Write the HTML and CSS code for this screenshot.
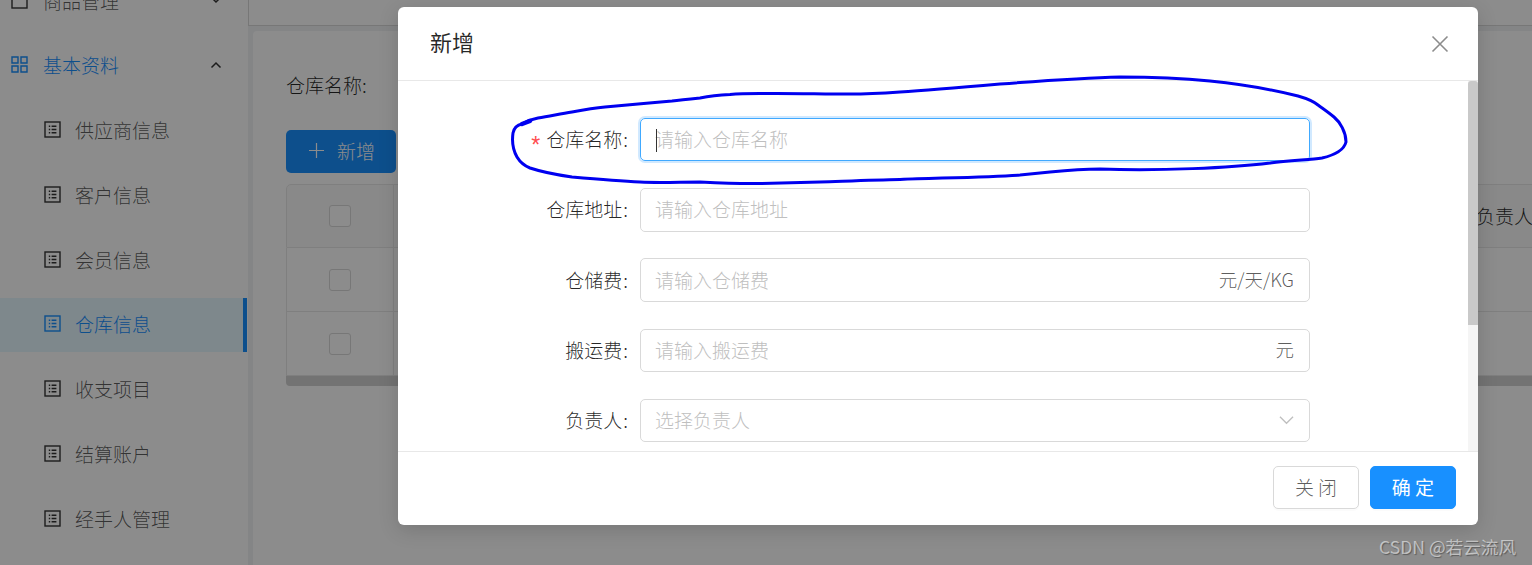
FILE: index.html
```html
<!DOCTYPE html>
<html lang="zh-CN">
<head>
    <meta charset="UTF-8">
    <title>仓库信息</title>
    <link rel="stylesheet" href="styles.css">
</head>
<body>

    <svg class="defs" width="0" height="0">
        <symbol id="icon-list" viewBox="0 0 17 17">
            <rect x="1" y="1" width="15" height="15" fill="none" stroke="currentColor" stroke-width="1.4"/>
            <path d="M4.8 5.2h1.4M4.8 8.5h1.4M4.8 11.8h1.4M7.6 5.2h4.8M7.6 8.5h4.8M7.6 11.8h4.8" stroke="currentColor" stroke-width="1.4" fill="none"/>
        </symbol>
    </svg>

    <div class="layout">
        <aside class="sidebar">
            <ul class="menu">
                <li class="menu-item group">
                    <svg class="group-icon" viewBox="0 0 17 17"><rect x="1" y="1" width="15" height="15" fill="none" stroke="currentColor" stroke-width="1.4"/></svg>
                    <span class="menu-text">商品管理</span>
                    <svg class="arrow" viewBox="0 0 12 8"><path d="M1.5 1.5 6 6l4.500-4.500" fill="none" stroke="currentColor" stroke-width="1.500"/></svg>
                </li>
                <li class="menu-item group open">
                    <svg class="group-icon" viewBox="0 0 17 17"><path d="M1 1h6v6H1zM10 1h6v6h-6zM1 10h6v6H1zM10 10h6v6h-6z" fill="none" stroke="currentColor" stroke-width="1.400"/></svg>
                    <span class="menu-text">基本资料</span>
                    <svg class="arrow" viewBox="0 0 12 8"><path d="M1.500 6.500 6 2l4.500 4.500" fill="none" stroke="#333" stroke-width="1.500"/></svg>
                </li>
                <li class="menu-item sub"><svg class="sub-icon"><use href="#icon-list"/></svg><span>供应商信息</span></li>
                <li class="menu-item sub"><svg class="sub-icon"><use href="#icon-list"/></svg><span>客户信息</span></li>
                <li class="menu-item sub"><svg class="sub-icon"><use href="#icon-list"/></svg><span>会员信息</span></li>
                <li class="menu-item sub active"><svg class="sub-icon"><use href="#icon-list"/></svg><span>仓库信息</span></li>
                <li class="menu-item sub"><svg class="sub-icon"><use href="#icon-list"/></svg><span>收支项目</span></li>
                <li class="menu-item sub"><svg class="sub-icon"><use href="#icon-list"/></svg><span>结算账户</span></li>
                <li class="menu-item sub"><svg class="sub-icon"><use href="#icon-list"/></svg><span>经手人管理</span></li>
            </ul>
        </aside>

        <main class="main">
            <div class="topbar"></div>
            <div class="content">
                <div class="card">
                    <div class="search-label">仓库名称:</div>
                    <button class="add-btn" type="button">
                        <svg class="plus" viewBox="0 0 16 16"><path d="M8 0v16M0 8h16" stroke="currentColor" stroke-width="1.300" fill="none"/></svg>
                        <span>新增</span>
                    </button>
                    <div class="table">
                        <div class="table-row head">
                            <div class="check-cell"><span class="checkbox"></span></div>
                            <div class="owner-cell">负责人</div>
                        </div>
                        <div class="table-row">
                            <div class="check-cell"><span class="checkbox"></span></div>
                        </div>
                        <div class="table-row">
                            <div class="check-cell"><span class="checkbox"></span></div>
                        </div>
                        <div class="table-scroll"></div>
                    </div>
                </div>
            </div>
        </main>
    </div>

    <div class="mask"></div>

    <section class="modal">
        <header class="modal-head">
            <h3>新增</h3>
            <svg class="close" viewBox="0 0 18 18"><path d="M1.500 1.500l15 15M16.500 1.500l-15 15" stroke="currentColor" stroke-width="1.600" fill="none"/></svg>
        </header>
        <div class="modal-body">
            <form class="form">
                <div class="form-row">
                    <label class="required">仓库名称</label>
                    <div class="field focused"><i class="caret"></i><span class="placeholder">请输入仓库名称</span></div>
                </div>
                <div class="form-row">
                    <label>仓库地址</label>
                    <div class="field"><span class="placeholder">请输入仓库地址</span></div>
                </div>
                <div class="form-row">
                    <label>仓储费</label>
                    <div class="field"><span class="placeholder">请输入仓储费</span><span class="suffix">元/天/KG</span></div>
                </div>
                <div class="form-row">
                    <label>搬运费</label>
                    <div class="field"><span class="placeholder">请输入搬运费</span><span class="suffix">元</span></div>
                </div>
                <div class="form-row">
                    <label>负责人</label>
                    <div class="field"><span class="placeholder">选择负责人</span>
                        <svg class="select-arrow" viewBox="0 0 16 10"><path d="M1 1.500l7 7 7-7" fill="none" stroke="currentColor" stroke-width="1.400"/></svg>
                    </div>
                </div>
            </form>
            <div class="scrollbar"><div class="thumb"></div></div>
        </div>
        <footer class="modal-foot">
            <button class="btn" type="button">关 闭</button>
            <button class="btn primary" type="button">确 定</button>
        </footer>
    </section>

    <svg class="scribble" viewBox="0 0 1532 565">
        <path d="M522 124 C517 125 514 128 513 133 C512 140 513 150 517 157 C520 162 525 166 530 168 C545 173 558 175 572 177 C595 179 618 181 640 182 C660 183 680 182 700 182 C720 183 740 184 760 183.500 C780 183 800 182.500 820 182 C850 181 875 180 900 179.500 C940 178 990 177 1020 175 C1030 174 1040 173 1050 172 C1070 170 1085 169 1100 169 C1160 171 1230 168 1270 163 C1290 160 1310 160 1322 158 C1335 155 1344 150 1346 142 C1346 132 1340 122 1334 117 C1328 112 1322 108 1318 105 C1312 100 1305 98 1298 96 C1270 89 1240 84 1210 81 C1180 78 1150 77 1120 77 C1080 78 1040 81 1000 84 C965 87 930 90 900 92 C885 93 865 94 850 94 C820 94 790 93 760 93.500 C745 93.500 735 94 730 94.500 C720 95 710 96 700 98 C690 99 680 100 672 101 C650 103 625 105 605 107 C595 108 583 110 572 112 C560 114 550 116 538 118 C532 119 527 121 522 124" fill="none" stroke="#0000f0" stroke-width="3" stroke-linecap="round"/>
        <path d="M522 124 L530 121" fill="none" stroke="#0000f0" stroke-width="4.500" stroke-linecap="round"/>
    </svg>

    <div class="watermark">CSDN @若云流风</div>

</body>
</html>
```

FILE: styles.css
```css
* {
    box-sizing: border-box;
}

html, body {
    margin: 0;
    height: 565px;
    overflow: hidden;
}

body {
    position: relative;
    font-family: "Noto Sans CJK SC", "Liberation Sans", sans-serif;
    font-size: 19px;
    font-weight: 300;
    color: rgba(0, 0, 0, .65);
    background: #fff;
}

.defs {
    position: absolute;
}

.layout {
    display: flex;
    height: 565px;
}

/* sidebar */
.sidebar {
    width: 248px;
    flex-shrink: 0;
    overflow: hidden;
    background: #fff;
}

.menu {
    list-style: none;
    margin: -26px 0 0;
    padding: 0;
}

.menu-item {
    display: flex;
    align-items: center;
    height: 54px;
    margin-bottom: 10.8px;
    padding-bottom: 2px;
}

.group {
    padding-left: 11px;
}

.group-icon {
    width: 17px;
    height: 17px;
    margin-right: 15px;
    color: #333;
}

.menu-text {
    flex: 1;
}

.arrow {
    width: 12px;
    height: 8px;
    margin-right: 26px;
    color: #333;
}

.open {
    color: #1890ff;
}

.open .group-icon {
    color: #1890ff;
}

.sub {
    padding-left: 44px;
}

.sub-icon {
    width: 17px;
    height: 17px;
    margin-right: 14px;
    color: #333;
}

.active {
    color: #1890ff;
    background: #e6f7ff;
    border-right: 4px solid #1890ff;
    margin-right: 1px;
}

.active .sub-icon {
    color: #1890ff;
}

/* main area behind the modal */
.main {
    flex: 1;
    min-width: 0;
    background: #f0f2f5;
    overflow: hidden;
}

.topbar {
    height: 26px;
    background: #fff;
    border-left: 1px solid #d9d9d9;
    border-bottom: 1px solid #d9d9d9;
}

.content {
    padding: 5px 0 0 5px;
}

.card {
    height: 540px;
    padding: 37px 0 0 33px;
    background: #fff;
    border-radius: 4px 0 0 0;
    overflow: hidden;
}

.search-label {
    height: 34px;
    line-height: 34px;
    color: rgba(0, 0, 0, .85);
}

.add-btn {
    display: flex;
    align-items: center;
    width: 110px;
    height: 43px;
    margin-top: 28px;
    padding: 0 0 2px 23px;
    border: 0;
    border-radius: 5px;
    background: #1890ff;
    color: #fff;
    font: inherit;
}

.plus {
    width: 15px;
    height: 15px;
    margin-right: 13px;
}

.table {
    width: 1400px;
    margin-top: 11px;
}

.table-row {
    display: flex;
    align-items: center;
    height: 64px;
    border: 1px solid #e8e8e8;
    border-top: 0;
}

.head {
    border-top: 1px solid #e8e8e8;
    border-radius: 5px 0 0 0;
    background: #fafafa;
}

.check-cell {
    display: flex;
    align-items: center;
    justify-content: center;
    align-self: stretch;
    width: 107px;
    border-right: 1px solid #e8e8e8;
}

.owner-cell {
    margin-left: 1082px;
    padding-bottom: 2px;
    color: rgba(0, 0, 0, .85);
}

.checkbox {
    width: 22px;
    height: 22px;
    border: 1px solid #d9d9d9;
    border-radius: 3px;
    background: #fff;
}

.table-scroll {
    height: 10px;
    background: #d1d1d1;
    border-radius: 0 0 0 4px;
}

.mask {
    position: absolute;
    inset: 0;
    background: rgba(0, 0, 0, .45);
}

/* modal */
.modal {
    position: absolute;
    top: 7px;
    left: 398px;
    width: 1080px;
    height: 518px;
    display: flex;
    flex-direction: column;
    background: #fff;
    border-radius: 6px;
    overflow: hidden;
    box-shadow: 0 5px 20px rgba(0, 0, 0, .15);
}

.modal-head {
    display: flex;
    align-items: center;
    justify-content: space-between;
    height: 74px;
    padding: 0 29px 0 32px;
    border-bottom: 1px solid #e8e8e8;
    flex-shrink: 0;
}

.modal-head h3 {
    margin: 0 0 6px;
    font-size: 22px;
    font-weight: 400;
    color: rgba(0, 0, 0, .85);
}

.close {
    width: 18px;
    height: 18px;
    color: rgba(0, 0, 0, .45);
}

.modal-body {
    flex: 1;
    display: flex;
    min-height: 0;
}

.form {
    flex: 1;
    padding-top: 36.9px;
    overflow: hidden;
}

.form-row {
    display: flex;
    align-items: center;
    height: 43.5px;
    margin-bottom: 26.75px;
}

.form-row label {
    width: 232px;
    margin-right: 10px;
    padding: 0 2px 2px 0;
    text-align: right;
    color: rgba(0, 0, 0, .85);
}

.form-row label::after {
    content: ":";
    margin-left: 1px;
}

.required::before {
    content: "*";
    margin-right: 6px;
    font-family: "Liberation Sans", sans-serif;
    font-size: 23px;
    line-height: 0;
    vertical-align: -6px;
    color: #ff4d4f;
}

.field {
    position: relative;
    display: flex;
    align-items: center;
    justify-content: space-between;
    width: 670px;
    height: 43.500px;
    padding: 0 15px 2px 14px;
    border: 1px solid #d9d9d9;
    border-radius: 5px;
}

.focused {
    border-color: #40a9ff;
    box-shadow: 0 0 0 2px rgba(24, 144, 255, .2);
}

.caret {
    position: absolute;
    left: 15px;
    top: 10px;
    width: 1px;
    height: 23px;
    background: #333;
}

.placeholder {
    color: #bfbfbf;
}

.suffix {
    color: rgba(0, 0, 0, .65);
    font-size: 18.500px;
}

.select-arrow {
    width: 15px;
    height: 10px;
    color: #bfbfbf;
}

.scrollbar {
    width: 10px;
    background: #f5f5f5;
    flex-shrink: 0;
}

.thumb {
    height: 244px;
    background: #c9c9c9;
    border-radius: 3px 3px 0 0;
}

.modal-foot {
    display: flex;
    align-items: flex-start;
    justify-content: flex-end;
    gap: 11px;
    height: 74px;
    padding: 14px 22px 0 0;
    border-top: 1px solid #e8e8e8;
    flex-shrink: 0;
}

.btn {
    width: 86px;
    height: 43px;
    padding: 0 0 3px;
    border: 1px solid #d9d9d9;
    border-radius: 5px;
    background: #fff;
    color: rgba(0, 0, 0, .65);
    font: inherit;
    box-shadow: 0 2px 0 rgba(0, 0, 0, .015);
}

.primary {
    border-color: #1890ff;
    background: #1890ff;
    color: #fff;
    font-weight: 400;
}

.scribble {
    position: absolute;
    top: 0;
    left: 0;
    width: 1532px;
    height: 565px;
    pointer-events: none;
}

.watermark {
    position: absolute;
    right: 16px;
    bottom: 6px;
    font-size: 17.6px;
    font-weight: 400;
    color: rgba(255, 255, 255, .55);
    text-shadow: 1px 1px 1px rgba(0, 0, 0, .35);
}
```
